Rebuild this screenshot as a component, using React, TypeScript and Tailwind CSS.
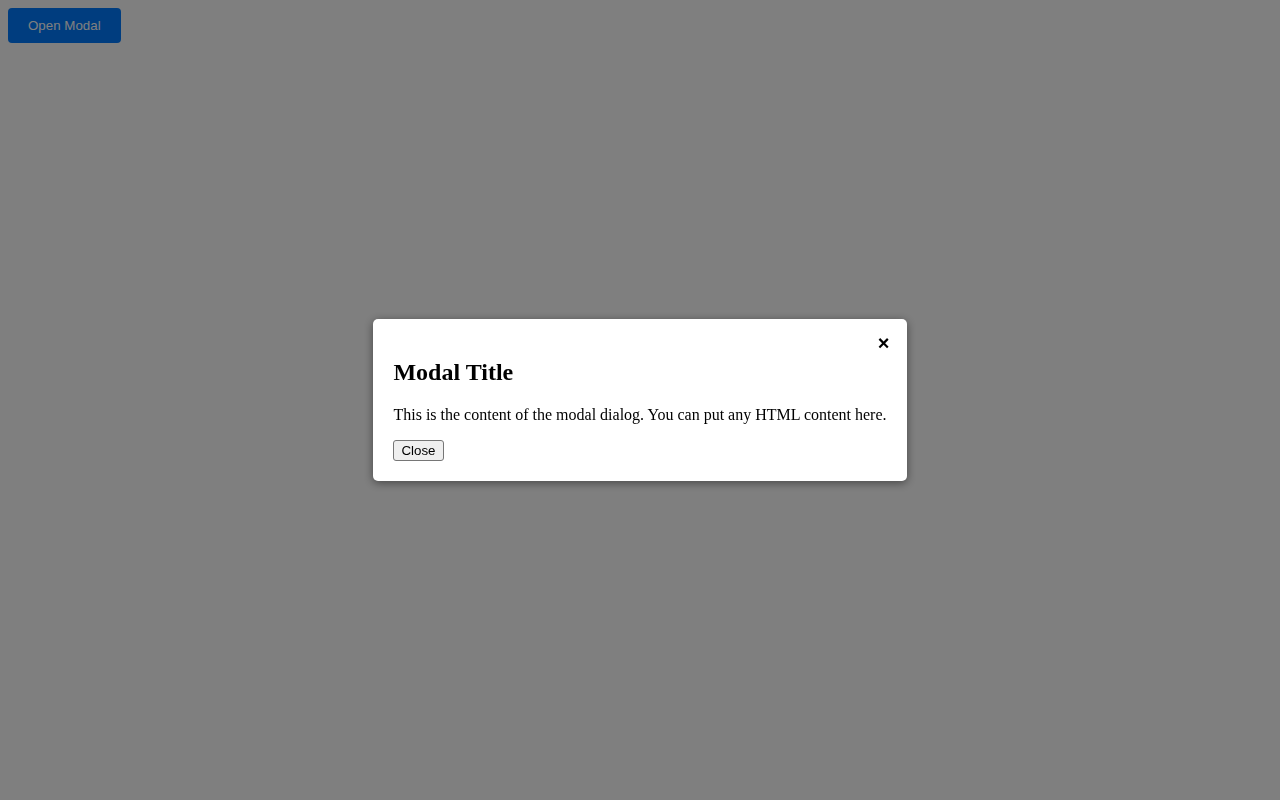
import { useState } from 'react';

export default function App() {
  const [open, setOpen] = useState(true);

  return (
    <div className="min-h-screen bg-white font-['Liberation_Serif',serif] text-black">
      <button
        onClick={() => setOpen(true)}
        className="m-2 rounded-[4px] bg-[#007bff] px-5 py-[10px] font-['Liberation_Sans',Arial,sans-serif] text-[13.33px] leading-[15px] text-white"
      >
        Open Modal
      </button>

      {open && (
        <div className="fixed inset-0 flex items-center justify-center bg-black/50">
          <div className="relative rounded-[5px] bg-white p-5 shadow-[0_2px_10px_rgba(0,0,0,0.45)]">
            <span
              onClick={() => setOpen(false)}
              className="absolute right-[17px] top-[14px] cursor-pointer font-['Liberation_Sans',Arial,sans-serif] text-[20px] font-bold leading-[20px]"
            >
              ×
            </span>
            <h2 className="mt-5 mb-5 text-[24px] font-bold leading-[27px]">Modal Title</h2>
            <p className="mb-4 text-[16px] leading-[18px]">
              This is the content of the modal dialog. You can put any HTML content here.
            </p>
            <button
              onClick={() => setOpen(false)}
              className="block rounded-[3px] border border-[#767676] bg-[#efefef] px-[7px] py-[1px] font-['Liberation_Sans',Arial,sans-serif] text-[13.33px] leading-[17px] text-black"
            >
              Close
            </button>
          </div>
        </div>
      )}
    </div>
  );
}
